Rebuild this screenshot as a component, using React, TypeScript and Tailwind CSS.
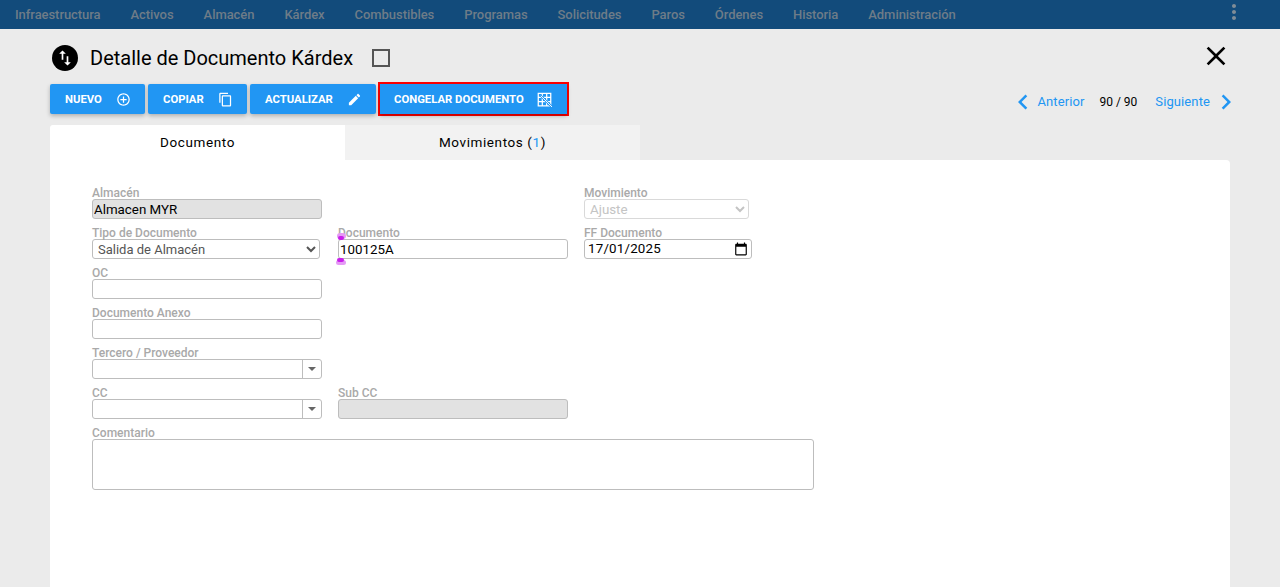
import React from 'react';

const menu = ['Infraestructura', 'Activos', 'Almacén', 'Kárdex', 'Combustibles', 'Programas', 'Solicitudes', 'Paros', 'Órdenes', 'Historia', 'Administración'];

const Icon: React.FC<{ d: string; className?: string }> = ({ d, className }) => (
  <svg viewBox="0 0 24 24" fill="currentColor" className={className}>
    <path d={d} />
  </svg>
);

const icons = {
  swap: 'M16 17.01V10h-2v7.01h-3L15 21l4-3.99h-3zM9 3L5 6.99h3V14h2V6.99h3L9 3z',
  add: 'M13 7h-2v4H7v2h4v4h2v-4h4v-2h-4V7zm-1-5C6.48 2 2 6.48 2 12s4.48 10 10 10 10-4.48 10-10S17.52 2 12 2zm0 18c-4.41 0-8-3.59-8-8s3.59-8 8-8 8 3.59 8 8-3.59 8-8 8z',
  copy: 'M16 1H4c-1.1 0-2 .9-2 2v14h2V3h12V1zm3 4H8c-1.1 0-2 .9-2 2v14c0 1.1.9 2 2 2h11c1.1 0 2-.9 2-2V7c0-1.1-.9-2-2-2zm0 16H8V7h11v14z',
  edit: 'M3 17.25V21h3.75L17.81 9.94l-3.75-3.75L3 17.25zM20.71 7.04c.39-.39.39-1.02 0-1.41l-2.34-2.34c-.39-.39-1.02-.39-1.41 0l-1.83 1.83 3.75 3.75 1.83-1.83z',
  close: 'M19 6.41L17.59 5 12 10.59 6.41 5 5 6.41 10.59 12 5 17.59 6.41 19 12 13.41 17.59 19 19 17.59 13.41 12z',
  left: 'M15.41 7.41L14 6l-6 6 6 6 1.41-1.41L10.83 12z',
  right: 'M10 6L8.59 7.41 13.17 12l-4.58 4.59L10 18l6-6z',
  more: 'M12 8c1.1 0 2-.9 2-2s-.9-2-2-2-2 .9-2 2 .9 2 2 2zm0 2c-1.1 0-2 .9-2 2s.9 2 2 2 2-.9 2-2-.9-2-2-2zm0 6c-1.1 0-2 .9-2 2s.9 2 2 2 2-.9 2-2-.9-2-2-2z',
  calendar: 'M20 3h-1V1h-2v2H7V1H5v2H4c-1.1 0-2 .9-2 2v16c0 1.1.9 2 2 2h16c1.1 0 2-.9 2-2V5c0-1.1-.9-2-2-2zm0 18H4V8h16v13z',
};

const FreezeIcon = () => (
  <svg viewBox="0 0 24 24" className="w-[15px] h-[15px]" fill="none" stroke="currentColor" strokeWidth="2">
    <path d="M2 2h20v20H2zM2 8.5h20M2 15.5h20M8.5 2v20M15.5 2v20" />
    <path d="M6 6l18 18" stroke="#2196f3" strokeWidth="3.5" />
    <path d="M6 6l18 18" strokeWidth="1.5" />
  </svg>
);

const Button: React.FC<{ label: string; icon: React.ReactNode; className: string }> = ({ label, icon, className }) => (
  <button className={`h-[30px] flex items-center justify-between bg-[#2196f3] text-white text-[11.3px] font-bold rounded-[2px] shadow-[0_2px_4px_rgba(0,0,0,0.25)] ${className}`}>
    <span className="pt-[2px]">{label}</span>
    {icon}
  </button>
);

const Label: React.FC<{ text: string }> = ({ text }) => (
  <div className="h-[12px] leading-[13px] text-[12px] font-medium text-[#a9a9a9] whitespace-nowrap">{text}</div>
);

const inputClass = "block h-[20px] w-[230px] border border-[#bdbdbd] rounded-[3px] bg-white px-[1px] text-[13.33px] text-black outline-none";

const Combo = () => (
  <div className="flex h-[20px] w-[230px] border border-[#bdbdbd] rounded-[3px] bg-white">
    <div className="flex-1" />
    <div className="w-[19px] border-l border-[#bdbdbd] flex items-center justify-center">
      <div className="w-0 h-0 border-x-[4.5px] border-x-transparent border-t-[4px] border-t-[#666]" />
    </div>
  </div>
);

export default function App() {
  return (
    <div className="h-[587px] overflow-hidden bg-[#ebebeb] font-['Roboto',sans-serif] text-black">
      <nav className="h-[29px] bg-[#124b7b] flex items-center justify-between pl-[15px] pr-[34px]">
        <div className="flex gap-[30px] text-[13px] font-medium tracking-[-0.06px] text-[#6e7c88]">
          {menu.map(m => <span key={m}>{m}</span>)}
        </div>
        <Icon d={icons.more} className="w-[24px] h-[24px] text-[#7f8c97] -mt-[5px]" />
      </nav>

      <div className="px-[50px]">
        <div className="h-[55px] flex items-center pt-[2px]">
          <div className="w-[26px] h-[26px] ml-[2px] rounded-full bg-black text-white flex items-center justify-center">
            <Icon d={icons.swap} className="w-[20px] h-[20px]" />
          </div>
          <h1 className="ml-[12px] text-[20px] leading-none">Detalle de Documento Kárdex</h1>
          <div className="ml-[19px] w-[18px] h-[18px] border-2 border-[#555]" />
          <Icon d={icons.close} className="w-[32px] h-[32px] ml-auto mr-[-2px] -mt-[3px]" />
        </div>

        <div className="h-[41px] flex items-start">
          <div className="flex items-center gap-[3px]">
            <Button label="NUEVO" className="w-[95px] px-[15px] pr-[14px]" icon={<Icon d={icons.add} className="w-[15px] h-[15px]" />} />
            <Button label="COPIAR" className="w-[99px] px-[15px] pr-[14px]" icon={<Icon d={icons.copy} className="w-[15px] h-[15px]" />} />
            <Button label="ACTUALIZAR" className="w-[126px] px-[15px] pr-[14px]" icon={<Icon d={icons.edit} className="w-[15px] h-[15px]" />} />
            <div className="-ml-[1px] border-2 border-[#f00] -my-[2px]">
              <Button label="CONGELAR DOCUMENTO" className="w-[187px] px-[14px] pr-[15px] !rounded-none" icon={<FreezeIcon />} />
            </div>
          </div>
          <div className="ml-auto flex items-center h-[36px] text-[13px]">
            <Icon d={icons.left} className="w-[30px] h-[30px] text-[#2196f3] -mr-[1px]" />
            <span className="text-[#2196f3] tracking-[0.1px]">Anterior</span>
            <span className="ml-[15px] -mt-[1px] text-[12px]">90 / 90</span>
            <span className="ml-[18px] text-[#2196f3] tracking-[0.1px]">Siguiente</span>
            <Icon d={icons.right} className="w-[30px] h-[30px] text-[#2196f3] ml-[1px] -mr-[11px]" />
          </div>
        </div>

        <div className="flex h-[35px] text-[13.5px] tracking-[0.6px]">
          <div className="w-[295px] bg-white flex items-center justify-center rounded-tl-[3px]">Documento</div>
          <div className="w-[295px] bg-[#f2f2f2] flex items-center justify-center">
            <span>Movimientos (<span className="text-[#2196f3]">1</span>)</span>
          </div>
        </div>

        <div className="relative h-[427px] bg-white rounded-tr-[4px] pl-[42px] pt-[27px]">
          <div className="flex h-[40px]">
            <div className="w-[246px]">
              <Label text="Almacén" />
              <input readOnly value="Almacen MYR" className={`${inputClass} !bg-[#e2e2e2]`} />
            </div>
            <div className="w-[246px]" />
            <div>
              <Label text="Movimiento" />
              <select disabled className="block h-[20px] w-[165px] border border-[#d9d9d9] rounded-[3px] bg-white px-[1px] text-[13.33px] text-[#c4c4c4]">
                <option>Ajuste</option>
              </select>
            </div>
          </div>

          <div className="flex h-[40px]">
            <div className="w-[246px]">
              <Label text="Tipo de Documento" />
              <select defaultValue="s" className="block h-[20px] w-[228px] border border-[#bdbdbd] rounded-[3px] bg-white px-[1px] text-[13px] text-[#555]">
                <option value="s">Salida de Almacén</option>
              </select>
            </div>
            <div className="w-[246px]">
              <Label text="Documento" />
              <input readOnly value="100125A" className={inputClass} />
            </div>
            <div>
              <Label text="FF Documento" />
              <div className="flex items-center justify-between h-[20px] w-[168px] border border-[#bdbdbd] rounded-[3px] bg-white pl-[3px] pr-[3px] text-[13.33px] tracking-[0.2px]">
                <span>17/01/2025</span>
                <Icon d={icons.calendar} className="w-[14px] h-[14px]" />
              </div>
            </div>
          </div>

          <div className="h-[40px]">
            <Label text="OC" />
            <input readOnly className={inputClass} />
          </div>
          <div className="h-[40px]">
            <Label text="Documento Anexo" />
            <input readOnly className={inputClass} />
          </div>
          <div className="h-[40px]">
            <Label text="Tercero / Proveedor" />
            <Combo />
          </div>
          <div className="flex h-[40px]">
            <div className="w-[246px]">
              <Label text="CC" />
              <Combo />
            </div>
            <div>
              <Label text="Sub CC" />
              <input readOnly className={`${inputClass} !bg-[#e2e2e2]`} />
            </div>
          </div>
          <div>
            <Label text="Comentario" />
            <textarea readOnly className="block h-[51px] w-[722px] border border-[#bdbdbd] rounded-[3px] bg-white resize-none" />
          </div>

          {/* marcadores de seleccion sobre el campo Documento */}
          <div className="absolute left-[287px] top-[73px] w-[9px] h-[6px] rounded-full bg-[#e59af5]" />
          <div className="absolute left-[288px] top-[76px] w-[6px] h-[4px] rounded-full bg-[#c81eea]" />
          <div className="absolute left-[286px] top-[100px] w-[10px] h-[5px] rounded-full bg-[#e59af5]" />
          <div className="absolute left-[287px] top-[98px] w-[7px] h-[4px] rounded-full bg-[#c81eea]" />
        </div>
      </div>
    </div>
  );
}
